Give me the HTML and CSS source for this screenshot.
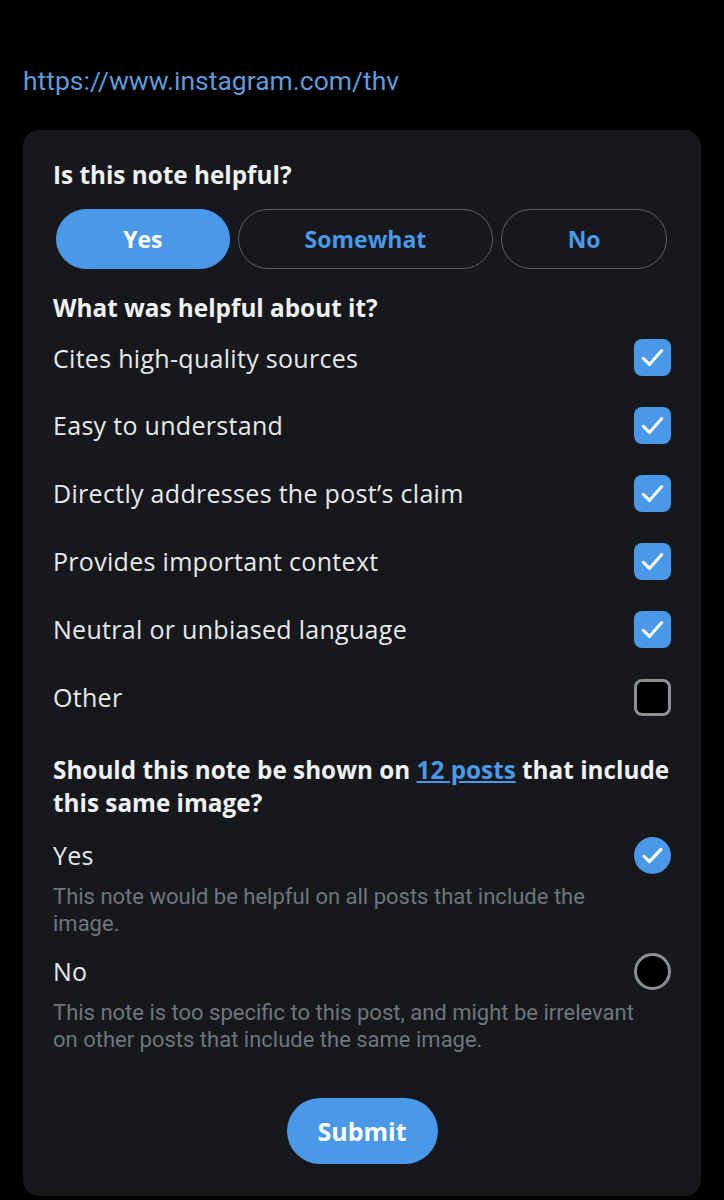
FILE: index.html
```html
<!DOCTYPE html>
<html>
  <head>
    <title>Rate note</title>
    <link rel="stylesheet" href="styles.css">
  </head>
  <body>
    <a class="source" href="#">https://www.instagram.com/thv</a>
    <div class="card">
      <h3 class="question">Is this note helpful?</h3>
      <div class="choices">
        <a href="#" class="choice choice-yes active">Yes</a>
        <a href="#" class="choice choice-somewhat">Somewhat</a>
        <a href="#" class="choice choice-no">No</a>
      </div>

      <h3 class="question">What was helpful about it?</h3>
      <div class="reasons">
        <div class="reason"><span>Cites high-quality sources</span><span class="box checked"><svg viewBox="0 0 24 24"><path d="M6 12.5l4 4 8-9"/></svg></span></div>
        <div class="reason"><span>Easy to understand</span><span class="box checked"><svg viewBox="0 0 24 24"><path d="M6 12.5l4 4 8-9"/></svg></span></div>
        <div class="reason"><span>Directly addresses the post’s claim</span><span class="box checked"><svg viewBox="0 0 24 24"><path d="M6 12.5l4 4 8-9"/></svg></span></div>
        <div class="reason"><span>Provides important context</span><span class="box checked"><svg viewBox="0 0 24 24"><path d="M6 12.5l4 4 8-9"/></svg></span></div>
        <div class="reason"><span>Neutral or unbiased language</span><span class="box checked"><svg viewBox="0 0 24 24"><path d="M6 12.5l4 4 8-9"/></svg></span></div>
        <div class="reason"><span>Other</span><span class="box"></span></div>
      </div>

      <h3 class="question wide">Should this note be shown on <a href="#">12 posts</a> that include this same image?</h3>
      <div class="option">
        <div class="option-head"><span>Yes</span><span class="radio checked"><svg viewBox="0 0 24 24"><path d="M6.5 12.5l3.5 3.5 7.5-8"/></svg></span></div>
        <p class="hint">This note would be helpful on all posts that include the image.</p>
      </div>
      <div class="option">
        <div class="option-head"><span>No</span><span class="radio"></span></div>
        <p class="hint">This note is too specific to this post, and might be irrelevant on other posts that include the same image.</p>
      </div>

      <div class="submitrow">
        <a href="#" class="submit">Submit</a>
      </div>
    </div>
  </body>
</html>
```

FILE: styles.css
```css
body{
	margin:0;
	background:#000000;
	font-family:"Open Sans", "Noto Sans", Arial, sans-serif;
	color:#e7e9ea;
}

a{
	text-decoration:none;
}

.source{
	display:block;
	padding:65px 23px 0 23px;
	height:65px;
	font-family:Roboto, Arial, sans-serif;
	font-size:26.5px;
	color:#5f9bd8;
}

.card{
	margin:0 23px;
	background:#16181c;
	border-radius:16px;
	padding:28px 30px 30px 30px;
	height:1008px;
}

.question{
	margin:0;
	font-size:24.3px;
	font-weight:bold;
	line-height:33px;
	color:#eff1f2;
}

.question a{
	color:#4a99e9;
	text-decoration:underline;
}

.choices{
	display:flex;
	gap:8px;
	padding:18px 4px 22px 3px;
}

.choice{
	display:flex;
	align-items:center;
	justify-content:center;
	height:58px;
	border:1px solid #5b5f63;
	border-radius:30px;
	font-size:23px;
	font-weight:bold;
	color:#4a99e9;
}

.choice-yes{ width:172px; }
.choice-somewhat{ width:254px; }
.choice-no{ width:164px; }

.choice.active{
	background:#4a99e9;
	border-color:#4a99e9;
	color:#ffffff;
}

.reasons{
	padding:0 0 22px 0;
}

.reason{
	display:flex;
	justify-content:space-between;
	align-items:center;
	height:68px;
	font-size:25px;
	letter-spacing:0.3px;
}

.reason:first-child{
	height:67px;
}

.box{
	width:37px;
	height:37px;
	box-sizing:border-box;
	border:3px solid #8b8f93;
	border-radius:8px;
	background:#000000;
}

.box.checked, .radio.checked{
	background:#4a99e9;
	border:none;
}

.box svg, .radio svg{
	display:block;
	width:100%;
	height:100%;
	fill:none;
	stroke:#ffffff;
	stroke-width:2;
	stroke-linecap:round;
	stroke-linejoin:round;
}

.question.wide{
	margin-bottom:16px;
}

.option-head{
	display:flex;
	justify-content:space-between;
	align-items:center;
	height:40px;
	font-size:25px;
	letter-spacing:0.3px;
}

.radio{
	width:37px;
	height:37px;
	box-sizing:border-box;
	border:3px solid #8b8f93;
	border-radius:50%;
	background:#000000;
}

.hint{
	margin:8px 0 14px 0;
	max-width:592px;
	font-family:Roboto, Arial, sans-serif;
	font-size:22px;
	line-height:27px;
	color:#6e767d;
}

.submitrow{
	display:flex;
	justify-content:center;
	padding-top:31px;
}

.submit{
	display:flex;
	align-items:center;
	justify-content:center;
	width:151px;
	height:66px;
	border-radius:33px;
	background:#4a99e9;
	color:#ffffff;
	font-size:25px;
	font-weight:bold;
}
```
